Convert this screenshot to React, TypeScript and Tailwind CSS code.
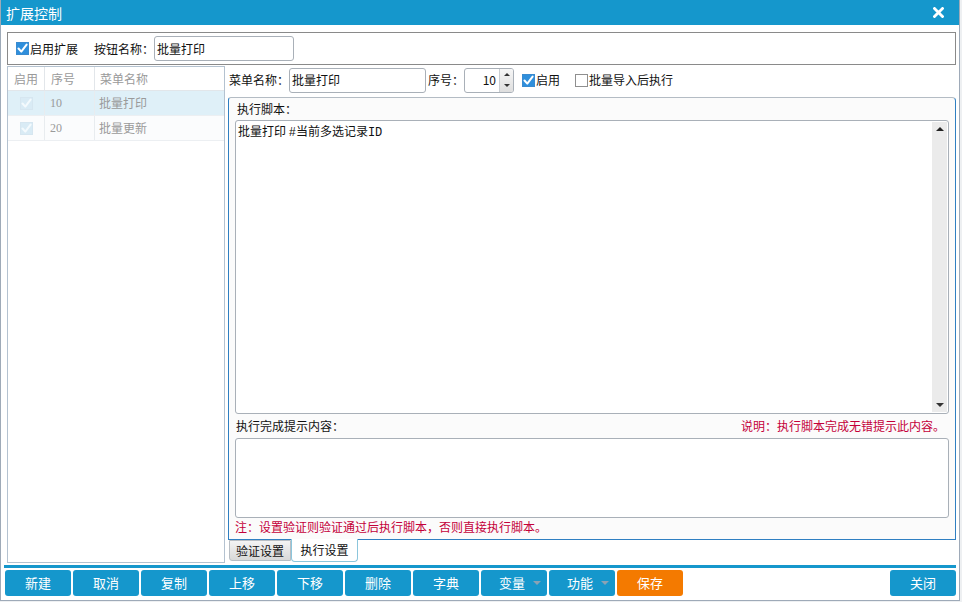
import React from 'react';

const FONT = '"Noto Sans CJK SC", "Microsoft YaHei", sans-serif';

function Check({ checked = true, disabled = false }: { checked?: boolean; disabled?: boolean }) {
  if (!checked) {
    return <span className="inline-block size-[13px] border border-[#8f8f8f] bg-white" />;
  }
  return (
    <span
      className={`inline-flex size-[13px] items-center justify-center border ${
        disabled ? 'border-[#d6e6f0] bg-[#d9ebf5]' : 'border-[#3a8bd0] bg-[#2f8fdc]'
      }`}
    >
      <svg width="11" height="11" viewBox="0 0 11 11">
        <path
          d="M1.5 5.5 L4.3 8.6 L9.6 1.6"
          fill="none"
          stroke={disabled ? '#f4fafd' : '#fff'}
          strokeWidth="2"
          strokeLinecap="round"
          strokeLinejoin="round"
        />
      </svg>
    </span>
  );
}

function Btn({ label, caret = false, orange = false }: { label: string; caret?: boolean; orange?: boolean }) {
  return (
    <button
      className={`relative flex h-[26px] w-[66px] items-center justify-center rounded-[3px] text-[13px] text-white ${
        orange ? 'bg-[#f47a00]' : 'bg-[#1597cc]'
      }`}
    >
      <span className={caret ? '-ml-[4px]' : ''}>{label}</span>
      {caret && (
        <span className="absolute right-[6px] top-[11px] size-0 border-x-[4px] border-t-[4px] border-x-transparent border-t-[#8aa2b4]" />
      )}
    </button>
  );
}

export default function App() {
  const rows = [
    { no: '10', name: '批量打印', sel: true },
    { no: '20', name: '批量更新', sel: false },
  ];

  return (
    <div className="h-[602px] w-[962px] overflow-hidden bg-[#eef0f2]" style={{ fontFamily: FONT }}>
      <div className="flex h-[601px] w-[960px] flex-col border border-t-0 border-[#9eaab8] bg-white text-[12px] text-[#111]">
        {/* title bar */}
        <div className="flex h-[25px] shrink-0 items-center justify-between bg-[#1597cc] pl-[5px] pr-[15px]">
          <span className="text-[14px] leading-none text-white">扩展控制</span>
          <svg width="11" height="11" viewBox="0 0 11 11">
            <path d="M1.5 1.5 L9.5 9.5 M9.5 1.5 L1.5 9.5" stroke="#fff" strokeWidth="2.8" strokeLinecap="square" />
          </svg>
        </div>

        <div className="flex flex-1 flex-col pl-[6px] pr-[3px]">
          {/* top bar */}
          <div className="mt-[7px] flex h-[33px] items-center border border-[#8a8a8a] pl-[8px]">
            <Check />
            <span className="ml-[1px]">启用扩展</span>
            <span className="ml-[16px]">按钮名称：</span>
            <div className="flex h-[25px] w-[140px] items-center rounded-[3px] border border-[#a9b0b8] px-[2px]">
              批量打印
            </div>
          </div>

          {/* main */}
          <div className="mt-[1px] flex h-[497px] gap-[3px]">
            {/* left list */}
            <div className="w-[218px] border border-[#b4c2d0] bg-white">
              <div className="flex h-[24px] items-center border-b border-[#e2e6ea] text-[#9a9a9a]">
                <div className="flex h-full w-[37px] items-center border-r border-[#e2e6ea] pl-[6px]">启用</div>
                <div className="flex h-full w-[50px] items-center border-r border-[#e2e6ea] pl-[6px]">序号</div>
                <div className="flex h-full flex-1 items-center pl-[5px]">菜单名称</div>
              </div>
              {rows.map(r => (
                <div
                  key={r.no}
                  className={`flex h-[25px] items-center border-b border-[#eceff2] text-[#9a9a9a] ${
                    r.sel ? 'bg-[#dff0f8]' : 'bg-[#fbfcfd]'
                  }`}
                >
                  <div className="flex h-full w-[37px] items-center justify-center border-r border-[#e8ecef]">
                    <Check disabled />
                  </div>
                  <div
                    className="flex h-full w-[50px] items-center border-r border-[#e8ecef] pl-[5px]"
                    style={{ fontFamily: '"Liberation Serif", serif' }}
                  >
                    {r.no}
                  </div>
                  <div className="flex h-full flex-1 items-center pl-[4px] text-[12px]">{r.name}</div>
                </div>
              ))}
            </div>

            {/* right */}
            <div className="flex flex-1 flex-col">
              <div className="mt-[1px] flex h-[26px] items-center">
                <span className="ml-[1px]">菜单名称：</span>
                <div className="flex h-[25px] w-[137px] items-center rounded-[3px] border border-[#a9b0b8] px-[2px]">
                  批量打印
                </div>
                <span className="ml-[2px]">序号：</span>
                <div className="flex h-[25px] w-[50px] overflow-hidden rounded-[3px] border border-[#a9b0b8]">
                  <div className="flex flex-1 items-center justify-end pr-[3px]">10</div>
                  <div className="flex w-[14px] flex-col border-l border-[#c8cdd2] bg-gradient-to-b from-[#f6f6f6] to-[#dedede]">
                    <div className="flex flex-1 items-center justify-center">
                      <span className="size-0 border-x-[3px] border-b-[3px] border-x-transparent border-b-[#333]" />
                    </div>
                    <div className="flex flex-1 items-center justify-center">
                      <span className="size-0 border-x-[3px] border-t-[3px] border-x-transparent border-t-[#333]" />
                    </div>
                  </div>
                </div>
                <span className="ml-[8px] flex items-center">
                  <Check />
                </span>
                <span className="ml-[1px]">启用</span>
                <span className="ml-[15px] flex items-center">
                  <Check checked={false} />
                </span>
                <span className="ml-[1px]">批量导入后执行</span>
              </div>

              <div className="mt-[4px] flex h-[443px] flex-col rounded-tr-[4px] rounded-tl-[3px] border border-[#2f7fc2] border-t-[#b4bcc4] bg-[#fbfbfb] px-[6px]">
                <div className="flex h-[22px] items-end pb-[2px] pl-[2px]">执行脚本：</div>
                <div className="flex h-[294px] rounded-[3px] border border-[#a9b0b8] bg-white">
                  <div className="flex-1 px-[2px] pt-[2px] leading-[16px]">
                    批量打印 <span style={{ fontFamily: '"Liberation Mono", "Noto Sans CJK SC", monospace' }}>#</span>
                    当前多选记录
                    <span style={{ fontFamily: '"Liberation Mono", monospace' }}>ID</span>
                  </div>
                  <div className="my-[1px] mr-[1px] flex w-[15px] flex-col justify-between bg-[#ebebeb]">
                    <div className="flex h-[14px] items-center justify-center">
                      <span className="size-0 border-x-[4px] border-b-[4px] border-x-transparent border-b-[#222]" />
                    </div>
                    <div className="flex h-[14px] items-center justify-center">
                      <span className="size-0 border-x-[4px] border-t-[4px] border-x-transparent border-t-[#333]" />
                    </div>
                  </div>
                </div>
                <div className="flex h-[24px] items-center justify-between pl-[1px] pr-[4px]">
                  <span>执行完成提示内容：</span>
                  <span className="text-[#c4003a]">说明：执行脚本完成无错提示此内容。</span>
                </div>
                <div className="h-[80px] rounded-[3px] border border-[#a9b0b8] bg-white" />
                <div className="flex h-[17px] items-center text-[#c4003a]">注：设置验证则验证通过后执行脚本，否则直接执行脚本。</div>
              </div>

              <div className="-mt-[1px] flex h-[23px] pl-[1px]">
                <div className="mt-[1px] flex h-[21px] w-[62px] items-center justify-center rounded-bl-[3px] border border-[#b8bec4] bg-gradient-to-b from-[#f4f4f4] to-[#d8d8d8]">
                  验证设置
                </div>
                <div className="flex h-[23px] w-[67px] items-center justify-center rounded-b-[4px] border border-t-0 border-[#8cc6dc] bg-white">
                  执行设置
                </div>
              </div>
            </div>
          </div>

          {/* toolbar */}
          <div className="-ml-[3px] mt-[2px] h-[3px] bg-[#1597cc]" />
          <div className="-ml-[2px] mt-[2px] flex gap-[2px]">
            <Btn label="新建" />
            <Btn label="取消" />
            <Btn label="复制" />
            <Btn label="上移" />
            <Btn label="下移" />
            <Btn label="删除" />
            <Btn label="字典" />
            <Btn label="变量" caret />
            <Btn label="功能" caret />
            <Btn label="保存" orange />
            <div className="flex-1" />
            <Btn label="关闭" />
          </div>
        </div>
      </div>
    </div>
  );
}
